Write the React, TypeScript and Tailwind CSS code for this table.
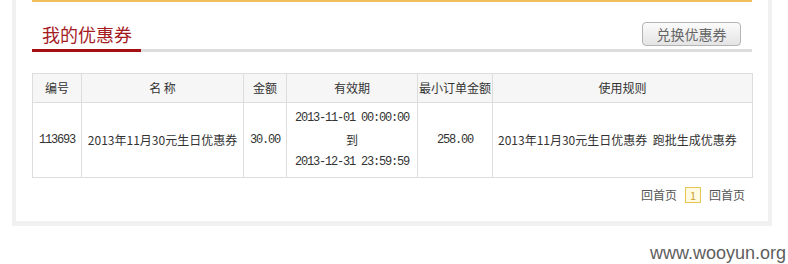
const cols = [
  { label: "编号", w: "w-[49px]" },
  { label: "名 称", w: "w-[162px]" },
  { label: "金额", w: "w-[43px]" },
  { label: "有效期", w: "w-[131px]" },
  { label: "最小订单金额", w: "w-[75px]" },
  { label: "使用规则", w: "w-[260px]" },
];

const mono = "font-['Liberation_Mono','Noto_Sans_CJK_SC',monospace] tracking-[-1.2px]";

export default function App() {
  return (
    <div className="relative h-[264px] bg-white font-['Noto_Sans_CJK_SC',sans-serif] text-[#333]">
      <div className="ml-3 w-[760px] border-x-4 border-b-[5px] border-[#f1f1f1] pl-4 pr-4 pb-[17px]">
        <div className="h-[2px] bg-[#f0c060]" />

        {/* title bar */}
        <div className="flex h-[47px] items-center justify-between pt-[17px]">
          <h2 className="pl-[10px] text-[18px] leading-[22px] text-[#a51c1f]">我的优惠券</h2>
          <button className="mr-[11px] h-[24px] w-[99px] rounded-[4px] border border-[#b4b4b4] bg-gradient-to-b from-[#fbfbfb] to-[#e4e4e4] text-[14px] leading-[22px] text-[#666]">
            兑换优惠券
          </button>
        </div>
        <div className="flex h-[3px]">
          <div className="w-[109px] bg-[#a40f14]" />
          <div className="flex-1 bg-[#dddddd]" />
        </div>

        {/* coupon table */}
        <table className="mt-[21px] w-[720px] table-fixed border-collapse border border-[#dddddd] text-[12px]">
          <thead>
            <tr className="h-[29px] bg-[#f6f6f6]">
              {cols.map((c) => (
                <th key={c.label} className={`${c.w} border border-[#dddddd] text-center font-normal`}>
                  {c.label}
                </th>
              ))}
            </tr>
          </thead>
          <tbody>
            <tr className="h-[74px]">
              <td className={`border border-[#dddddd] text-center ${mono}`}>113693</td>
              <td className="border border-[#dddddd] text-center">2013年11月30元生日优惠券</td>
              <td className={`border border-[#dddddd] text-center ${mono}`}>30.00</td>
              <td className={`border border-[#dddddd] py-1 text-center leading-[22px] ${mono}`}>
                <div>2013-11-01 00:00:00</div>
                <div className="font-['Noto_Sans_CJK_SC',sans-serif] tracking-normal">到</div>
                <div>2013-12-31 23:59:59</div>
              </td>
              <td className={`border border-[#dddddd] text-center ${mono}`}>258.00</td>
              <td className="border border-[#dddddd] pl-[5px] text-left">
                2013年11月30元生日优惠券&nbsp;&nbsp;跑批生成优惠券
              </td>
            </tr>
          </tbody>
        </table>

        {/* pager */}
        <div className="mt-[8px] mr-[7px] flex items-center justify-end gap-2 text-[12px] text-[#555]">
          <span>回首页</span>
          <span className="flex h-4 w-4 items-center justify-center border border-[#e6c65c] bg-[#fffae0] text-[11px] text-[#c8a030]">
            1
          </span>
          <span>回首页</span>
        </div>
      </div>

      <span className="absolute right-[2px] top-[240px] font-['Liberation_Sans',Arial,sans-serif] text-[18px] text-[#5e5e5e]">
        www.wooyun.org
      </span>
    </div>
  );
}
